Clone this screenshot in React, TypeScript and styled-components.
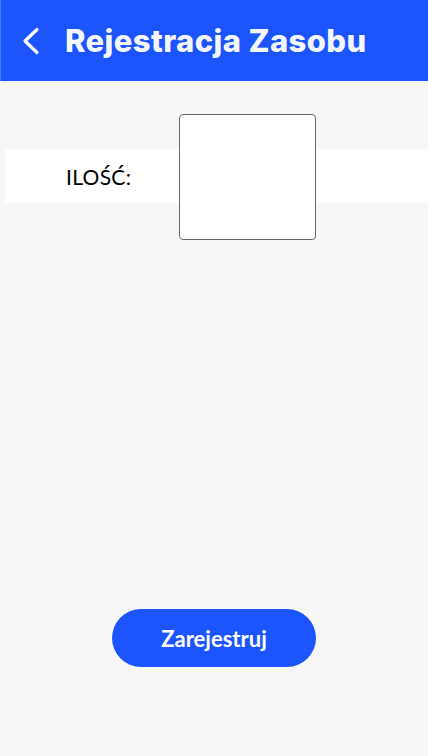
import React, {FC} from 'react'
import styled, {createGlobalStyle} from 'styled-components'

const GlobalStyle = createGlobalStyle`
  html, body {
    margin: 0;
    padding: 0;
    background: #f7f7f7;
  }
  * {
    box-sizing: border-box;
  }
`;

const Page = styled.div`
  width: 428px;
  height: 756px;
  display: flex;
  flex-direction: column;
  background: #f7f7f7;
  font-family: Lato, "Liberation Sans", sans-serif;
`;

const Header = styled.header`
  height: 81px;
  flex-shrink: 0;
  display: flex;
  flex-direction: row;
  align-items: center;
  padding-left: 21px;
  background: #1c54fd;
  border-left: 1px solid #4a7bff;
`;

const BackButton = styled.button`
  width: 20px;
  height: 28px;
  padding: 0;
  margin-right: 23px;
  border: none;
  background: none;
  display: flex;
  align-items: center;
  justify-content: center;
  cursor: pointer;
`;

const Title = styled.h1`
  margin: 0;
  color: #f5f7ff;
  font-family: Inter, "Open Sans", sans-serif;
  font-size: 31px;
  font-weight: 800;
  letter-spacing: 0.4px;
`;

const Content = styled.main`
  flex: 1;
  display: flex;
  flex-direction: column;
  padding-top: 69px;
  padding-left: 5px;
`;

const FieldRow = styled.div`
  height: 53px;
  display: flex;
  flex-direction: row;
  align-items: center;
  background: #ffffff;
`;

const Label = styled.label`
  width: 174px;
  padding-left: 61px;
  color: #000;
  font-size: 21px;
  font-weight: 400;
  letter-spacing: 0.3px;
`;

const QuantityBox = styled.textarea`
  width: 137px;
  height: 126px;
  margin-top: 1px;
  border: 1px solid #666666;
  border-radius: 4px;
  background: #ffffff;
  resize: none;
  outline: none;
  font-family: Lato, "Liberation Sans", sans-serif;
  font-size: 18px;
`;

const Spacer = styled.div`
  flex: 1;
`;

const Footer = styled.div`
  height: 147px;
  display: flex;
  justify-content: center;
`;

const SubmitButton = styled.button`
  width: 204px;
  height: 58px;
  border: none;
  border-radius: 29px;
  background: #1c54fd;
  color: #ffffff;
  font-family: Lato, "Liberation Sans", sans-serif;
  font-size: 22px;
  font-weight: 700;
  cursor: pointer;
`;

const App: FC = () => {
    return (
        <Page>
            <GlobalStyle/>
            <Header>
                <BackButton aria-label="Wstecz">
                    <svg width="20" height="28" viewBox="0 0 20 28">
                        <path d="M15 2.5 L3 14 L15 25.5" fill="none" stroke="#ffffff" strokeWidth="3.2"
                              strokeLinecap="round" strokeLinejoin="round"/>
                    </svg>
                </BackButton>
                <Title>Rejestracja Zasobu</Title>
            </Header>
            <Content>
                <FieldRow>
                    <Label>ILOŚĆ:</Label>
                    <QuantityBox/>
                </FieldRow>
                <Spacer/>
            </Content>
            <Footer>
                <SubmitButton>Zarejestruj</SubmitButton>
            </Footer>
        </Page>
    )
}

export default App
